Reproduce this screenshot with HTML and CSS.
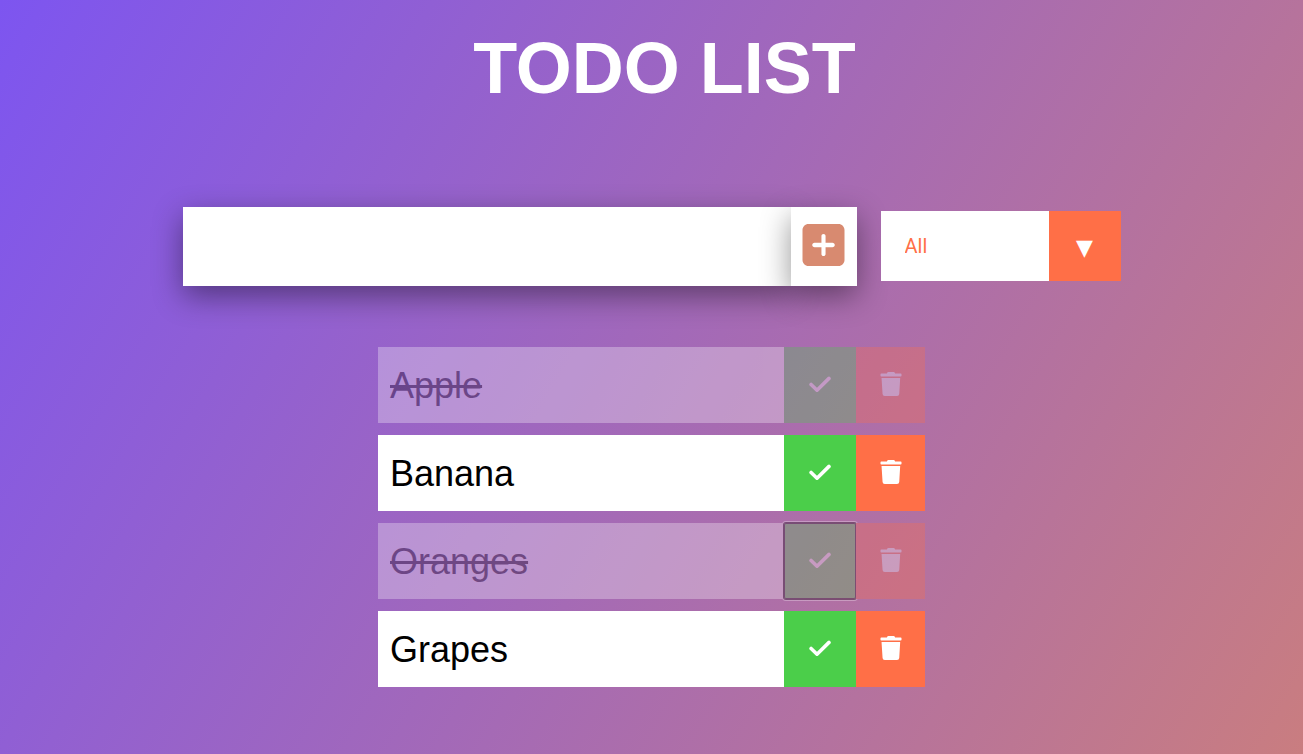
FILE: index.html
```html
<!DOCTYPE html>
<html lang="en">
<head>
  <meta charset="utf-8">
  <meta name="viewport" content="width=device-width, initial-scale=1">
  <title>Todo List</title>
  <link rel="stylesheet" href="styles.css">
</head>
<body>
  <svg class="sprite" aria-hidden="true">
    <symbol id="icon-plus" viewBox="0 0 448 512">
      <path d="M64 32C28.700 32 0 60.700 0 96V416c0 35.300 28.700 64 64 64H384c35.300 0 64-28.700 64-64V96c0-35.300-28.700-64-64-64H64zM202 352V280H128c-13.300 0-24-10.700-24-24s10.700-24 24-24h74V160c0-13.300 9-22 22-22s22 8.700 22 22v72h74c13.300 0 24 10.700 24 24s-10.700 24-24 24H246v72c0 13.300-9 22-22 22s-22-8.700-22-22z"/>
    </symbol>
    <symbol id="icon-check" viewBox="0 0 448 512">
      <path d="M34 266 160 388 416 136" fill="none" stroke="currentColor" stroke-width="76" stroke-linecap="round" stroke-linejoin="round"/>
    </symbol>
    <symbol id="icon-trash" viewBox="0 0 448 512">
      <path d="M432 32H312l-9.400-18.700A24 24 0 0 0 281.100 0H166.800a23.720 23.720 0 0 0-21.400 13.300L136 32H16A16 16 0 0 0 0 48v32a16 16 0 0 0 16 16h416a16 16 0 0 0 16-16V48a16 16 0 0 0-16-16zM44 467a48 48 0 0 0 47.900 45h260a48 48 0 0 0 47.900-45L420 128H22z"/>
    </symbol>
  </svg>

  <header class="header">
    <h1 class="title">TODO LIST</h1>
  </header>

  <main>
    <form class="controls">
      <div class="entry">
        <input class="entry-input" type="text" aria-label="New todo">
        <button class="entry-button" type="button" aria-label="Add todo">
          <svg class="icon-large" aria-hidden="true"><use href="#icon-plus"/></svg>
        </button>
      </div>
      <div class="filter">
        <select class="filter-select" aria-label="Filter todos">
          <option>All</option>
          <option>Completed</option>
          <option>Uncompleted</option>
        </select>
      </div>
    </form>

    <ul class="todos">
      <li class="todo completed">
        <span class="todo-text">Apple</span>
        <button class="complete-button" type="button" aria-label="Complete Apple"><svg class="icon" aria-hidden="true"><use href="#icon-check"/></svg></button>
        <button class="trash-button" type="button" aria-label="Delete Apple"><svg class="icon" aria-hidden="true"><use href="#icon-trash"/></svg></button>
      </li>
      <li class="todo">
        <span class="todo-text">Banana</span>
        <button class="complete-button" type="button" aria-label="Complete Banana"><svg class="icon" aria-hidden="true"><use href="#icon-check"/></svg></button>
        <button class="trash-button" type="button" aria-label="Delete Banana"><svg class="icon" aria-hidden="true"><use href="#icon-trash"/></svg></button>
      </li>
      <li class="todo completed">
        <span class="todo-text">Oranges</span>
        <button class="complete-button focused" type="button" aria-label="Complete Oranges"><svg class="icon" aria-hidden="true"><use href="#icon-check"/></svg></button>
        <button class="trash-button" type="button" aria-label="Delete Oranges"><svg class="icon" aria-hidden="true"><use href="#icon-trash"/></svg></button>
      </li>
      <li class="todo">
        <span class="todo-text">Grapes</span>
        <button class="complete-button" type="button" aria-label="Complete Grapes"><svg class="icon" aria-hidden="true"><use href="#icon-check"/></svg></button>
        <button class="trash-button" type="button" aria-label="Delete Grapes"><svg class="icon" aria-hidden="true"><use href="#icon-trash"/></svg></button>
      </li>
    </ul>
  </main>
</body>
</html>
```
FILE: styles.css
```css
* {
  box-sizing: border-box;
  margin: 0;
  padding: 0;
}

body {
  min-height: 100vh;
  background: linear-gradient(120deg, #7d55f0, #c97d80);
  color: white;
  font-family: "Liberation Sans", Arial, sans-serif;
}

button,
input,
select {
  border: none;
  border-radius: 0;
  outline: none;
  font: inherit;
}

button,
select {
  cursor: pointer;
}

.sprite {
  position: absolute;
  width: 0;
  height: 0;
}

.header {
  padding: 26px 0 0 26px;
  text-align: center;
}

.title {
  font-size: 72px;
  line-height: 84px;
}

.controls {
  display: flex;
  align-items: flex-start;
  justify-content: center;
  gap: 24px;
  padding: 97px 16px 0;
}

.entry {
  display: flex;
  flex: 0 1 674px;
  min-width: 0;
}

.entry-input,
.entry-button {
  background: white;
  box-shadow: 0 10px 30px rgba(0, 0, 0, 0.42);
}

.entry-input {
  flex: 1;
  min-width: 0;
  height: 79px;
  padding: 18px 12px;
  font-size: 36px;
  line-height: 43px;
}

.entry-button {
  display: flex;
  padding: 14px 12px 0 11px;
  color: #d88a70;
}

.icon-large {
  width: 43px;
  height: 48px;
  fill: currentColor;
}

.filter {
  position: relative;
  width: 240px;
  margin-top: 4px;
}

.filter-select {
  appearance: none;
  display: block;
  width: 100%;
  padding: 20px 96px 20px 24px;
  background: white;
  color: #ff6f47;
  font-family: Roboto, sans-serif;
  font-size: 20px;
  line-height: 30px;
}

.filter::after {
  content: "\25BC";
  position: absolute;
  top: 0;
  right: 0;
  bottom: 0;
  display: grid;
  place-items: center;
  width: 72px;
  padding-top: 2px;
  background: #ff6f47;
  font-family: "DejaVu Sans", sans-serif;
  font-size: 22px;
  pointer-events: none;
}

.todos {
  display: grid;
  gap: 12px;
  width: 100%;
  max-width: 547px;
  margin: 61px auto 0;
  list-style: none;
}

.todo {
  display: flex;
  background: white;
  color: black;
  font-size: 36px;
  line-height: 52px;
}

.todo-text {
  flex: 1;
  padding: 13px 12px 11px;
}

.completed {
  opacity: 0.3;
}

.completed .todo-text {
  text-decoration: line-through;
}

.complete-button,
.trash-button {
  display: flex;
  align-items: center;
  justify-content: center;
  padding-bottom: 2px;
  color: white;
}

.complete-button {
  width: 72px;
  background: #4bce4a;
}

.trash-button {
  width: 69px;
  background: #ff6f47;
}

.focused {
  border-radius: 2px;
  box-shadow: inset 0 0 0 1px black, 0 0 0 1px black, 0 0 0 2px white;
}

.icon {
  width: 22px;
  height: 24px;
  fill: currentColor;
}
```
